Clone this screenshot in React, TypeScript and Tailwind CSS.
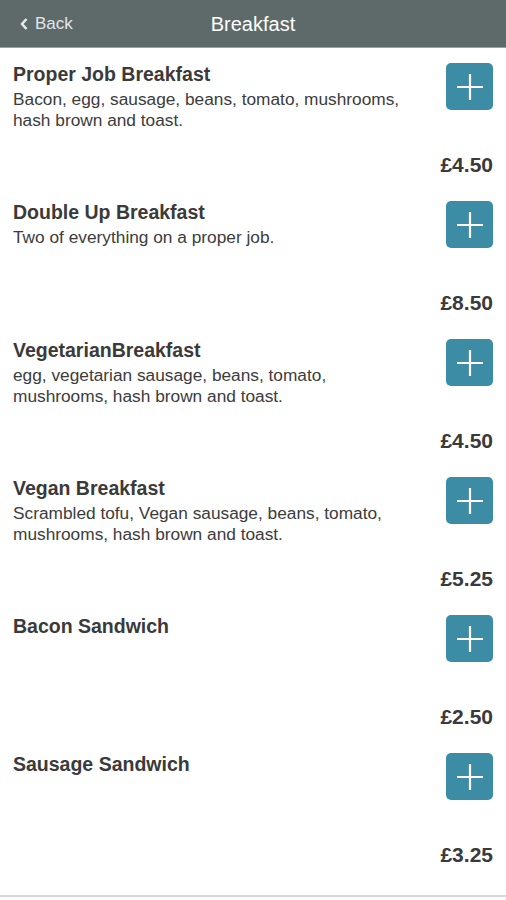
import React from "react";

const items = [
  { t: "Proper Job Breakfast", d: "Bacon, egg, sausage, beans, tomato, mushrooms, hash brown and toast.", p: "£4.50" },
  { t: "Double Up Breakfast", d: "Two of everything on a proper job.", p: "£8.50" },
  { t: "VegetarianBreakfast", d: "egg, vegetarian sausage, beans, tomato, mushrooms, hash brown and toast.", p: "£4.50" },
  { t: "Vegan Breakfast", d: "Scrambled tofu, Vegan sausage, beans, tomato, mushrooms, hash brown and toast.", p: "£5.25" },
  { t: "Bacon Sandwich", d: "", p: "£2.50" },
  { t: "Sausage Sandwich", d: "", p: "£3.25" },
];

function PlusButton() {
  return (
    <div className="w-[47px] h-[47px] rounded-[5px] bg-[#3d8ca6] flex items-center justify-center shrink-0">
      <svg width="28" height="28" viewBox="0 0 28 28">
        <path d="M14 1V27M1 14H27" stroke="#ffffff" strokeWidth="2.2" />
      </svg>
    </div>
  );
}

export default function App() {
  return (
    <div className="w-[506px] h-[900px] bg-white flex flex-col overflow-hidden" style={{ fontFamily: '"Liberation Sans", Arial, sans-serif' }}>
      <div className="h-[48px] bg-[#5e6a6a] border-b border-[#9aa3a3] relative flex items-center shrink-0">
        <div className="flex items-center pl-[19px] text-[#e2e6e6] text-[17px]">
          <svg width="10" height="14" viewBox="0 0 10 14" className="mr-[6px]">
            <path d="M7.5 2L3 7L7.5 12" stroke="#e8ecec" strokeWidth="2.4" fill="none" />
          </svg>
          <span>Back</span>
        </div>
        <div className="absolute left-0 right-0 text-center text-white text-[20px] pointer-events-none">Breakfast</div>
      </div>
      {items.map((it, i) => (
        <div key={i} className="h-[138px] flex flex-col px-[13px] shrink-0">
          <div className="flex justify-between">
            <div className="pt-[15px] text-[#3a3a3a]">
              <div className="text-[19.5px] font-bold leading-[22px]">{it.t}</div>
              <div className="text-[17.3px] leading-[21px] mt-[4px] w-[405px] text-[#3c3c3c]">{it.d}</div>
            </div>
            <div className="pt-[15px]">
              <PlusButton />
            </div>
          </div>
          <div className="mt-auto mb-[9px] text-right text-[21px] font-bold text-[#3a3a3a] leading-[24px]">{it.p}</div>
        </div>
      ))}
      <div className="h-[19px] shrink-0" />
      <div className="border-t-[2px] border-[#d8d8d8] flex-1" />
    </div>
  );
}
